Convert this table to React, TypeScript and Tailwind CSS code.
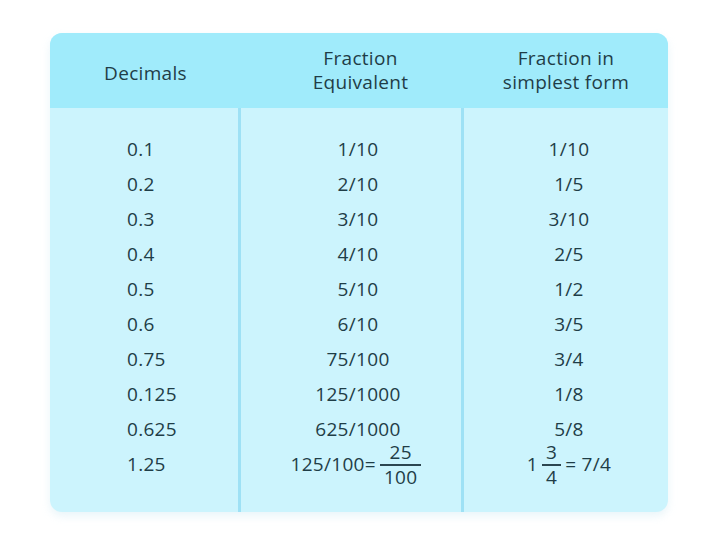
const rows = [
  ["0.1", "1/10", "1/10"],
  ["0.2", "2/10", "1/5"],
  ["0.3", "3/10", "3/10"],
  ["0.4", "4/10", "2/5"],
  ["0.5", "5/10", "1/2"],
  ["0.6", "6/10", "3/5"],
  ["0.75", "75/100", "3/4"],
  ["0.125", "125/1000", "1/8"],
  ["0.625", "625/1000", "5/8"],
]

function Frac({ top, bottom }: { top: string; bottom: string }) {
  return (
    <span className="inline-flex flex-col items-center mx-1 gap-[1px]">
      <span className="px-1 leading-[21px]">{top}</span>
      <span className="h-[2px] w-full bg-[#2c4650]" />
      <span className="px-1 leading-[21px]">{bottom}</span>
    </span>
  )
}

export default function App() {
  return (
    <div className="w-[720px] h-[550px] bg-white pt-[33px] pl-[50px] font-['Open_Sans',sans-serif] text-[19px] tracking-[0.3px] font-medium text-[#1f3d47]">
      <div className="w-[618px] rounded-xl overflow-hidden bg-[#ccf4fd] shadow-[0_4px_8px_rgba(200,230,240,0.4)]">
        {/* header */}
        <div className="grid grid-cols-[191px_223px_204px] h-[75px] bg-[#a0ebfb] leading-[21px] text-center">
          <div className="flex items-center justify-center pt-[6px]">Decimals</div>
          <div className="flex flex-col items-center justify-center gap-[3px] pl-[16px]">
            <span>Fraction</span>
            <span>Equivalent</span>
          </div>
          <div className="flex flex-col items-center justify-center gap-[3px]">
            <span>Fraction in</span>
            <span>simplest form</span>
          </div>
        </div>

        {/* body */}
        <div className="grid grid-cols-[191px_223px_204px] h-[404px]">
          <div className="border-r-[3px] border-[#9ee1f5] pt-[24px] pl-[77px]">
            {rows.map((r) => (
              <div key={r[0]} className="h-[35px] flex items-center">{r[0]}</div>
            ))}
            <div className="h-[35px] flex items-center">1.25</div>
          </div>
          <div className="border-r-[3px] border-[#9ee1f5] pt-[24px] pl-[14px] text-center">
            {rows.map((r) => (
              <div key={r[0]} className="h-[35px] flex items-center justify-center">{r[1]}</div>
            ))}
            <div className="h-[35px] flex items-center justify-center">
              <span>125/100=</span>
              <Frac top="25" bottom="100" />
            </div>
          </div>
          <div className="pt-[24px] pl-[6px] text-center">
            {rows.map((r) => (
              <div key={r[0]} className="h-[35px] flex items-center justify-center">{r[2]}</div>
            ))}
            <div className="h-[35px] flex items-center justify-center">
              <span>1</span>
              <Frac top="3" bottom="4" />
              <span>= 7/4</span>
            </div>
          </div>
        </div>
      </div>
    </div>
  )
}
